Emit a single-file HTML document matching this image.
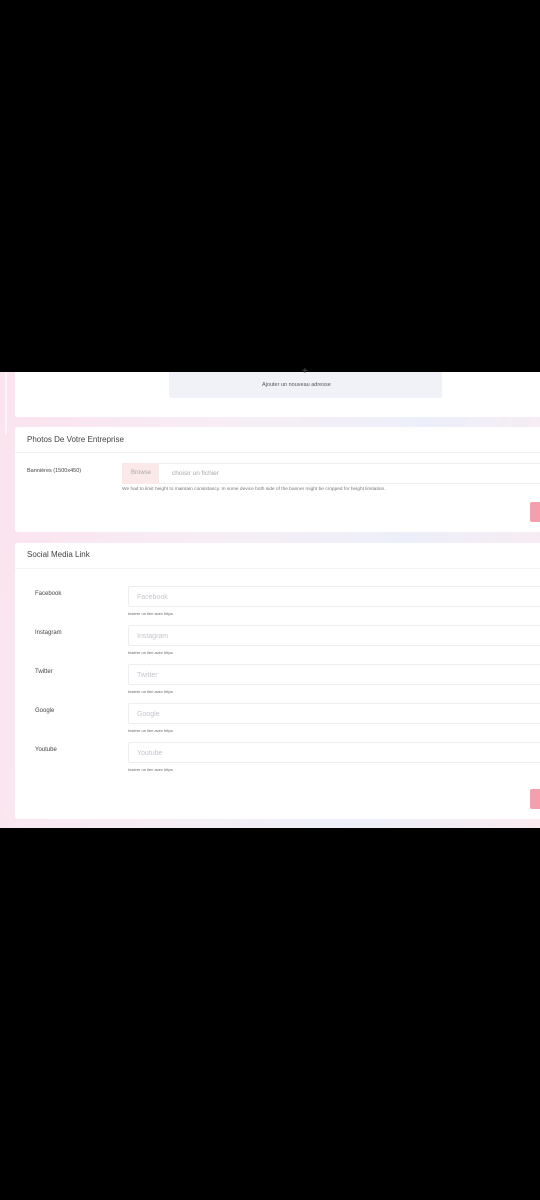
<!DOCTYPE html><html><head><style>
*{margin:0;padding:0;box-sizing:border-box}
body{width:540px;height:1200px;background:#000;position:relative;overflow:hidden;font-family:"Liberation Sans",sans-serif}
.bg{position:absolute;left:0;top:372px;width:540px;height:456px;background:linear-gradient(100deg,#fbe3ee 0%,#f7eef5 40%,#eceff9 70%,#fbeaf0 100%)}
.abs{position:absolute}
.card{position:absolute;left:15px;width:540px;background:#fff;border-radius:3px}
.t{position:absolute;color:#444;white-space:nowrap}
.inp{position:absolute;left:128px;width:420px;height:21px;border:1px solid #eceef2;background:#fff;border-radius:2px}
.ph{position:absolute;left:8px;top:7px;font-size:7px;color:#c4c6cc}
.help{position:absolute;left:128px;font-size:4px;color:#666}
.btn{position:absolute;left:530px;width:20px;height:20px;background:#f29fae;border-radius:2px}
</style></head><body>
<div class="bg"></div>
<div class="abs" style="left:5px;top:372px;width:2px;height:62px;background:#fdf4f8"></div>
<div class="card" style="top:372px;height:45px;border-radius:0 0 3px 3px"></div>
<div class="abs" style="left:169px;top:372px;width:273px;height:26px;background:#f1f2f7;border-radius:0 0 2px 2px"></div>
<div class="t" style="left:302px;top:366px;font-size:10px;color:#555">+</div>
<div class="t" style="left:262px;top:382px;font-size:5.5px;color:#555">Ajouter un nouveau adresse</div>

<div class="card" style="top:427px;height:105px"></div>
<div class="t" style="left:27px;top:435px;font-size:8px">Photos De Votre Entreprise</div>
<div class="abs" style="left:15px;top:452px;width:525px;height:1px;background:#f1f1f4"></div>
<div class="t" style="left:27px;top:468px;font-size:5.5px">Bannières (1500x450)</div>
<div class="abs" style="left:122px;top:463px;width:430px;height:21px;border:1px solid #eceef2;background:#fff"></div>
<div class="abs" style="left:122px;top:463px;width:37px;height:21px;background:#fbe8e8"></div>
<div class="t" style="left:131px;top:470px;font-size:6px;color:#aaa">Browse</div>
<div class="t" style="left:172px;top:470px;font-size:6.5px;color:#aaa">choisir un fichier</div>
<div class="t" style="left:122px;top:487px;font-size:4.8px;color:#777">We had to limit height to maintain consistancy. In some device both side of the banner might be cropped for height limitation.</div>
<div class="btn" style="top:502px"></div>

<div class="card" style="top:543px;height:276px"></div>
<div class="t" style="left:27px;top:550px;font-size:8px">Social Media Link</div>
<div class="abs" style="left:15px;top:568px;width:525px;height:1px;background:#f3f3f6"></div>

<div class="t" style="left:35px;top:591px;font-size:6px">Facebook</div>
<div class="inp" style="top:586px"><span class="ph">Facebook</span></div>
<div class="help" style="top:611px">Insérer un lien avec https</div>

<div class="t" style="left:35px;top:630px;font-size:6px">Instagram</div>
<div class="inp" style="top:625px"><span class="ph">Instagram</span></div>
<div class="help" style="top:650px">Insérer un lien avec https</div>

<div class="t" style="left:35px;top:669px;font-size:6px">Twitter</div>
<div class="inp" style="top:664px"><span class="ph">Twitter</span></div>
<div class="help" style="top:689px">Insérer un lien avec https</div>

<div class="t" style="left:35px;top:708px;font-size:6px">Google</div>
<div class="inp" style="top:703px"><span class="ph">Google</span></div>
<div class="help" style="top:728px">Insérer un lien avec https</div>

<div class="t" style="left:35px;top:747px;font-size:6px">Youtube</div>
<div class="inp" style="top:742px"><span class="ph">Youtube</span></div>
<div class="help" style="top:767px">Insérer un lien avec https</div>

<div class="btn" style="top:789px"></div>
</body></html>
